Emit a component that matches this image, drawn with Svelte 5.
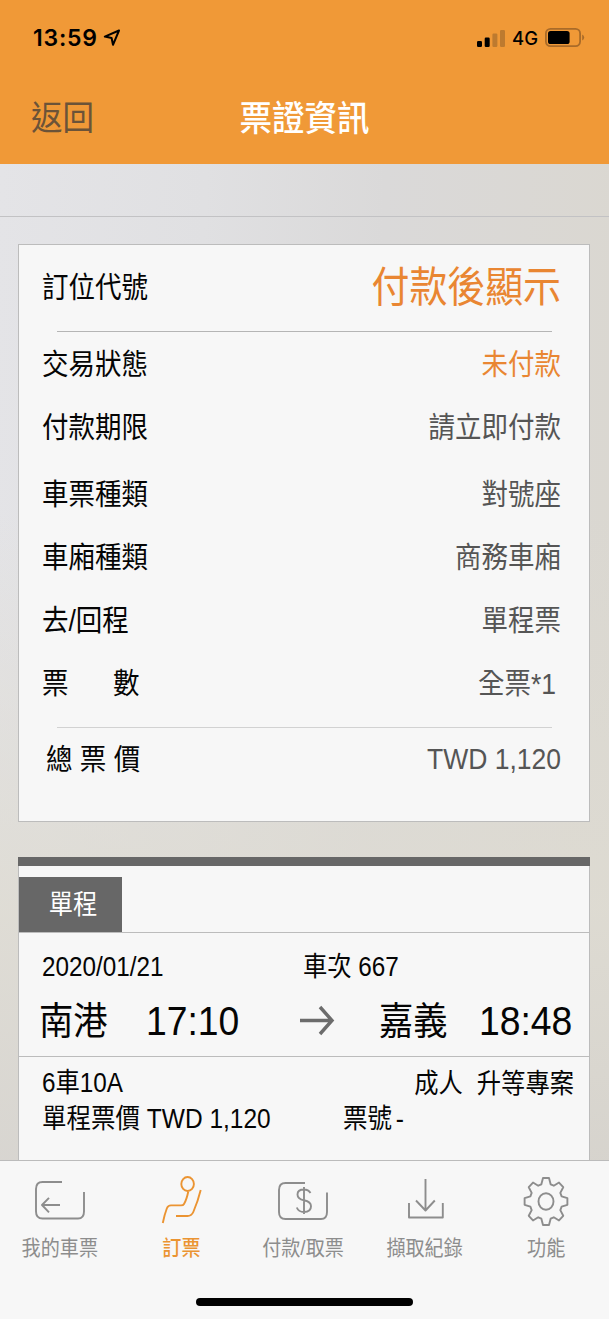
<script lang="ts">
  type Row = { label: string; value: string; kind?: string }

  const rows: Row[] = [
    { label: '交易狀態', value: '未付款', kind: 'unpaid' },
    { label: '付款期限', value: '請立即付款' },
    { label: '車票種類', value: '對號座', kind: 'spaced' },
    { label: '車廂種類', value: '商務車廂' },
    { label: '去/回程', value: '單程票' },
    { label: '票　數', value: '全票*1', kind: 'count' },
  ]

  const tabs = [
    { id: 'tickets', label: '我的車票' },
    { id: 'book', label: '訂票' },
    { id: 'pay', label: '付款/取票' },
    { id: 'history', label: '擷取紀錄' },
    { id: 'settings', label: '功能' },
  ]

  let active = $state('book')

  // gear outline: eight teeth, four points each
  const gear = Array.from({ length: 8 }, (_, i) => i * 45)
    .flatMap((a) => [
      [a - 16.5, 16.3],
      [a - 8, 21.6],
      [a + 8, 21.6],
      [a + 16.5, 16.3],
    ])
    .map(([deg, r]) => {
      const t = (deg * Math.PI) / 180
      return `${(25 + r * Math.sin(t)).toFixed(2)},${(25.5 - r * 1.1 * Math.cos(t)).toFixed(2)}`
    })
    .join(' ')
</script>

<div class="screen">
  <header>
    <div class="status">
      <span class="clock">13:59</span>
      <svg class="location" width="18" height="18" viewBox="0 0 18 18">
        <path d="M16 1.5 1.8 7.6 8.6 9 10 15.8Z" />
      </svg>
      <svg class="signal" width="29" height="18" viewBox="0 0 29 18">
        <rect x="0" y="12" width="5" height="6" rx="1.2" />
        <rect x="7.7" y="8.5" width="5" height="9.5" rx="1.2" />
        <rect class="off" x="15.4" y="4.5" width="5" height="13.5" rx="1.2" />
        <rect class="off" x="23" y="1" width="5" height="17" rx="1.2" />
      </svg>
      <span class="network">4G</span>
      <svg class="battery" width="40" height="19" viewBox="0 0 40 19">
        <rect class="shell" x=".9" y=".9" width="34.2" height="17.2" rx="4.6" />
        <rect x="3" y="3" width="21.6" height="13" rx="2.6" />
        <path class="cap" d="M37.2 6.6q2 1 2 3t-2 3Z" />
      </svg>
    </div>
    <nav>
      <button class="back"><span class="tall">返回</span></button>
      <h1><span class="tall">票證資訊</span></h1>
    </nav>
  </header>

  <main>
    <div class="strip"></div>

    <section class="card">
      <div class="row code">
        <span class="tall">訂位代號</span>
        <span class="tall value">付款後顯示</span>
      </div>
      <hr />
      {#each rows as row}
        <div class="row {row.kind ?? ''}">
          <span class="tall label">{row.label}</span>
          <span class="tall value">{row.value}</span>
        </div>
      {/each}
      <hr class="light" />
      <div class="row total">
        <span class="tall label">總 票 價</span>
        <span class="tall value">TWD 1,120</span>
      </div>
    </section>

    <section class="trip">
      <div class="heading"><span class="badge"><span class="tall">單程</span></span></div>
      <div class="leg">
        <div class="date">
          <span class="tall">2020/01/21</span>
          <span class="tall">車次 667</span>
        </div>
        <div class="route">
          <span class="tall station">南港</span>
          <span class="tall time">17:10</span>
          <svg width="36" height="32" viewBox="0 0 36 32">
            <path d="M0 15.500H32M20 2 32 15.500 20 29" />
          </svg>
          <span class="tall station">嘉義</span>
          <span class="tall time">18:48</span>
        </div>
      </div>
      <div class="seat">
        <span class="tall">6車10A</span>
        <span class="tall fare-type"><span>成人</span><span>升等專案</span></span>
      </div>
      <div class="seat price">
        <span class="tall">單程票價 TWD 1,120</span>
        <span class="tall number">票號 -</span>
      </div>
    </section>
  </main>

  <footer>
    <div class="tabs">
      {#each tabs as tab}
        <button class="tab" class:active={active === tab.id} onclick={() => (active = tab.id)}>
          <svg width="50" height="52" viewBox="0 0 50 52">
            {#if tab.id === 'tickets'}
              <path d="M27 6H7.500Q1 6 1 13V35.500Q1 42.500 7.500 42.500H43Q49 42.500 49 35.500V16" />
              <path d="M25 29H7M14 21.800 7 29 14 36.300" />
            {:else if tab.id === 'book'}
              <ellipse cx="31.600" cy="8" rx="6.300" ry="7" />
              <path d="M32.300 15.500Q30.500 24 28 28 27.300 29.400 25 29.400H15Q12 29.400 10.800 32.500 8.500 38.500 6.800 47" />
              <path d="M44.700 14Q42 25 37.300 36 35.500 40 31.500 40H20" />
            {:else if tab.id === 'pay'}
              <path d="M27 7H7.500Q1 7 1 14V36Q1 43 7.500 43H43Q49 43 49 36V16.500" />
              <path d="M26 11V38M32.500 17Q30.500 13.500 26 13.500 19.500 13.500 19.500 18.500 19.500 23 26 24.300 33 25.800 33 30.300 33 36 26 36 20.500 36 18.800 31.500" />
            {:else if tab.id === 'history'}
              <path d="M25.500 3V34M16 24.500 25.500 34.500 34.800 24.500M9 27V41.500H42.800V27" />
            {:else}
              <polygon points={gear} />
              <ellipse cx="25" cy="25.500" rx="7.500" ry="8.300" />
            {/if}
          </svg>
          <span class="tall">{tab.label}</span>
        </button>
      {/each}
    </div>
    <div class="home"></div>
  </footer>
</div>

<style>
  :global(body) {
    margin: 0;
  }

  .screen {
    box-sizing: border-box;
    width: 609px;
    height: 1319px;
    display: flex;
    flex-direction: column;
    overflow: hidden;
    background: #f7f7f7;
    color: #050505;
    font-family: 'Liberation Sans', 'Noto Sans CJK TC', sans-serif;
    white-space: nowrap;
  }

  button {
    padding: 0;
    border: 0;
    background: none;
    font-family: inherit;
  }

  .tall {
    display: inline-block;
    line-height: 1.2;
    transform: scaleY(1.1);
  }

  header {
    height: 164px;
    flex: none;
    background: #f09937;
  }

  .status {
    height: 75px;
    padding: 0 24px 0 33px;
    box-sizing: border-box;
    display: flex;
    align-items: center;
    color: #000;
    font-family: Inter, sans-serif;
  }

  .clock {
    width: 66px;
    font-size: 23px;
    font-weight: 600;
    letter-spacing: 0.8px;
  }

  .location {
    margin-left: 4px;
  }

  .location path {
    fill: none;
    stroke: #000;
    stroke-width: 2;
    stroke-linejoin: round;
  }

  .signal {
    margin-left: auto;
  }

  .signal .off {
    fill: #bd7a2f;
  }

  .network {
    margin: 1px 7px 0 6px;
    font-size: 18.5px;
    font-weight: 500;
  }

  .battery .shell {
    fill: none;
    stroke: #a96b29;
    stroke-width: 1.8;
  }

  .battery .cap {
    fill: #a96b29;
  }

  nav {
    height: 88px;
    display: grid;
    grid-template-columns: 1fr auto 1fr;
    align-items: center;
  }

  .back {
    padding-left: 31px;
    text-align: left;
    font-size: 31.5px;
    color: #6b5338;
  }

  h1 {
    margin: 0;
    font-size: 32.5px;
    font-weight: 500;
    color: #fff;
  }

  main {
    flex: 1;
    min-height: 0;
    padding: 0 19px 0 18px;
    overflow: hidden;
    background:
      linear-gradient(180deg, rgba(224, 221, 213, 0) 35%, rgba(222, 219, 210, 0.85) 75%, rgba(214, 211, 205, 0.85)),
      linear-gradient(92deg, #e4e4e7 0%, #e0e0e2 32%, #dad9d9 60%, #dad7d0 100%);
  }

  .strip {
    height: 52px;
    margin: 0 -19px 27px -18px;
    border-bottom: 1px solid #c2c2c4;
  }

  .card {
    height: 578px;
    box-sizing: border-box;
    border: 1px solid #bcbcbc;
    background: #f7f7f7;
    font-size: 26.5px;
  }

  .row {
    height: 63px;
    padding: 2px 28px 0 23px;
    box-sizing: border-box;
    display: flex;
    align-items: center;
    justify-content: space-between;
  }

  .value {
    color: #555;
  }

  .code {
    height: 86px;
  }

  .code .value {
    font-size: 37.9px;
    color: #e98632;
  }

  .unpaid {
    margin-top: 1px;
  }

  .unpaid .value {
    color: #e98632;
  }

  .spaced {
    margin-top: 4px;
  }

  .count {
    padding-right: 33px;
  }

  .count .label {
    letter-spacing: 9px;
  }

  .total .label {
    margin-left: 4px;
  }

  .total .value {
    margin-top: -1px;
  }

  hr {
    height: 1px;
    margin: 0 37px 0 38px;
    border: 0;
    background: #b5b5b5;
  }

  hr.light {
    margin-top: 12px;
    background: #d2d2d2;
  }

  .trip {
    height: 330px;
    margin-top: 35px;
    border: 1px solid #bcbcbc;
    border-top: 0;
    background: #f7f7f7;
    font-size: 24.3px;
  }

  .trip::before {
    content: '';
    display: block;
    height: 9px;
    margin: 0 -1px;
    background: #676767;
  }

  .heading {
    height: 66px;
    display: flex;
    align-items: flex-end;
    border-bottom: 1px solid #bcbcbc;
  }

  .badge {
    width: 103px;
    height: 55px;
    padding-left: 5px;
    box-sizing: border-box;
    display: grid;
    place-items: center;
    background: #676767;
    color: #fff;
  }

  .leg {
    height: 123px;
    border-bottom: 1px solid #bcbcbc;
  }

  .date {
    height: 66px;
    padding: 2px 0 0 23px;
    box-sizing: border-box;
    display: grid;
    grid-template-columns: 261px 1fr;
    align-items: center;
  }

  .route {
    height: 42px;
    padding-left: 20px;
    display: grid;
    grid-template-columns: 107px 154px 79px 100px auto;
    justify-content: start;
    align-items: center;
  }

  .route svg path {
    fill: none;
    stroke: #6c6c6c;
    stroke-width: 3.4;
  }

  .station {
    font-size: 34.3px;
  }

  .time {
    font-size: 37.3px;
  }

  .seat {
    height: 35px;
    margin-top: 8px;
    padding: 0 15px 0 23px;
    display: flex;
    align-items: center;
    justify-content: space-between;
  }

  .fare-type {
    margin-top: 3px;
  }

  .fare-type span + span {
    margin-left: 14px;
  }

  .price {
    margin-top: 1px;
    padding-right: 185px;
    font-size: 24.5px;
  }

  .number {
    word-spacing: -3px;
  }

  footer {
    height: 159px;
    flex: none;
    box-sizing: border-box;
    border-top: 1px solid #bbb;
    display: flex;
    flex-direction: column;
    align-items: center;
    background: #f7f7f7;
  }

  .tabs {
    width: 609px;
    height: 137px;
    display: grid;
    grid-template-columns: repeat(5, 121.6px);
  }

  .tab {
    padding: 15px 2px 0 0;
    display: flex;
    flex-direction: column;
    align-items: center;
    gap: 9px;
    font-size: 19.1px;
    color: #8d8d8d;
  }

  .tab.active {
    color: #eb9432;
    font-weight: 500;
  }

  .tab svg {
    fill: none;
    stroke: currentColor;
    stroke-width: 1.9;
    stroke-linejoin: round;
  }

  .home {
    width: 217px;
    height: 8px;
    border-radius: 4px;
    background: #000;
  }
</style>
